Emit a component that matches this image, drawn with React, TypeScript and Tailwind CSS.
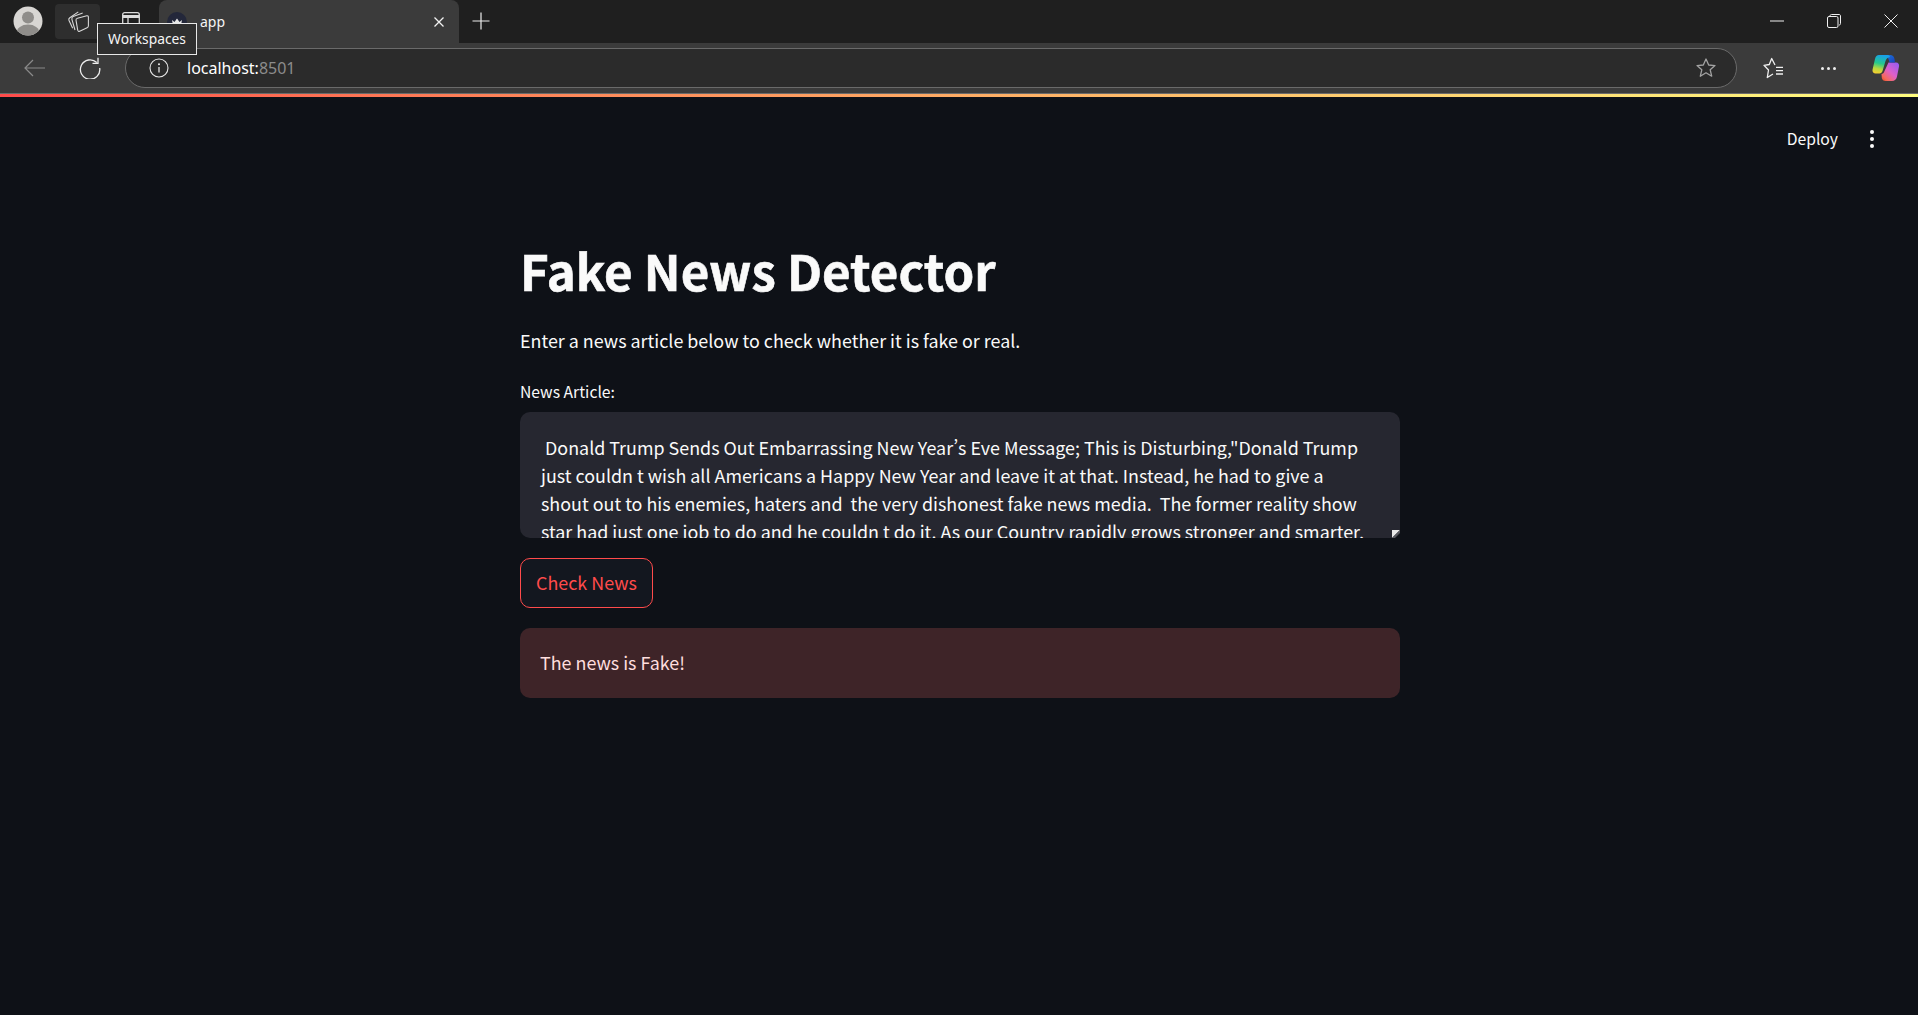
import React from "react";

const sans = "font-['Noto_Sans_CJK_SC','Noto_Sans',sans-serif]";
const ui = "font-['Noto_Sans',sans-serif]";

function Copilot() {
  return (
    <svg width="28" height="28" viewBox="0 0 28 28">
      <defs>
        <linearGradient id="cpA" x1="0.5" y1="0" x2="0.3" y2="1">
          <stop offset="0" stopColor="#18a0ea" />
          <stop offset="0.45" stopColor="#25c98c" />
          <stop offset="0.75" stopColor="#b8d840" />
          <stop offset="1" stopColor="#f5cf30" />
        </linearGradient>
        <linearGradient id="cpB" x1="0" y1="0" x2="1" y2="1">
          <stop offset="0" stopColor="#1a78e0" />
          <stop offset="1" stopColor="#1b3fb8" />
        </linearGradient>
        <linearGradient id="cpC" x1="0.9" y1="0.05" x2="0.1" y2="1">
          <stop offset="0" stopColor="#9a5cf0" />
          <stop offset="0.5" stopColor="#e060c8" />
          <stop offset="0.85" stopColor="#f56a5a" />
          <stop offset="1" stopColor="#e8502f" />
        </linearGradient>
      </defs>
      <path d="M16.500 8.500H24c2.300 0 3.500 1.800 3 4l-2 10c-.6 2.800-2.200 4.500-5 4.500h-6.500c-2 0-3.200-1.200-3.700-3L9.500 20c1.400-.2 2.300-1 2.800-2.500z" fill="url(#cpC)" />
      <path d="M14 1h4c2.500 0 4 1.500 4.500 4l.5 3.500h-5.500c-.8-3.500-1.800-6-3.500-7.500z" fill="url(#cpB)" />
      <path d="M7 1h8c1.500 0 2.500.6 3 2-2.300.3-3.700 1.600-4.500 4l-3 10c-.5 1.500-1.500 2.500-3 2.500h-3C1 19.500 0 17.500.7 15L3 5C3.500 2.500 5 1 7 1z" fill="url(#cpA)" />
    </svg>
  );
}

function Star() {
  return (
    <svg width="22" height="22" viewBox="0 0 22 22" fill="none" stroke="#a3a3a3" strokeWidth="1.300" strokeLinejoin="round">
      <path d="M11 2l2.700 6 6.300.6-4.800 4.200 1.500 6.400L11 15.800l-5.700 3.400 1.500-6.400L2 8.600 8.300 8z" />
    </svg>
  );
}

export default function App() {
  return (
    <div className={`flex h-[1015px] w-[1918px] flex-col overflow-hidden bg-[#0e1117] ${sans}`}>
      {/* tab strip */}
      <div className="relative flex h-[43px] shrink-0 items-stretch bg-[#1f1f1f]">
        <div className="flex w-[55px] items-center justify-center pl-[1px] pb-[1px]">
          <svg width="30" height="30" viewBox="0 0 30 30">
            <circle cx="15" cy="15" r="14.500" fill="#d8d6d3" />
            <clipPath id="av"><circle cx="15" cy="15" r="14.500" /></clipPath>
            <g clipPath="url(#av)">
              <circle cx="15" cy="11.500" r="6" fill="#8f8d8a" />
              <ellipse cx="15" cy="27" rx="11.500" ry="8.500" fill="#8f8d8a" />
            </g>
          </svg>
        </div>
        <div className="my-[4px] flex w-[45px] items-center justify-center rounded-[4px] bg-[#2e2e2e]">
          <svg width="22" height="22" viewBox="0 0 22 22" fill="none" stroke="#d6d6d6" strokeWidth="1.100" strokeLinejoin="round">
            <path d="M5.700 17.300L2 9.500C1.400 8.300 1.700 7.500 2.800 6.700L11.300 .9" />
            <path d="M8 19L4.900 8.300C4.600 7 5 6.100 6.200 5.600L15.700 1.900" />
            <path d="M10.500 7.200l9.300-2.400c1-.2 1.600.3 1.600 1.300v8.600c0 1-.4 1.600-1.300 2l-7.400 3.500c-1 .4-1.700 0-2-1L9 9.200c-.2-1 .4-1.700 1.500-2z" />
          </svg>
        </div>
        <div className="flex w-[59px] items-center justify-center pl-[3px] pb-[2px]">
          <svg width="18" height="18" viewBox="0 0 18 18" fill="none" stroke="#dcdcdc" strokeWidth="1.300">
            <rect x="0.700" y="0.700" width="16.600" height="16.600" rx="2" />
            <path d="M0.700 4.500h16.600" strokeWidth="3" />
            <path d="M6 5v12" />
          </svg>
        </div>
        <div className="relative flex w-[300px] items-center rounded-t-[8px] bg-[#3b3b3b] pl-[8px] pr-[14px] pt-[1px]">
          <svg width="20" height="20" viewBox="0 0 20 20">
            <circle cx="10" cy="10" r="10" fill="#23273a" />
            <path d="M5 8l2.500 2L10 6.500l2.500 3.500L15 8l-1.200 6H6.200z" fill="#e8e8e8" />
          </svg>
          <span className={`ml-[13px] flex-1 text-[14px] leading-[20px] text-[#f5f5f5] ${ui}`}>app</span>
          <svg width="12" height="12" viewBox="0 0 12 12" stroke="#f2f2f2" strokeWidth="1.300"><path d="M1.500 1.500l9 9M10.500 1.500l-9 9" /></svg>
        </div>
        <div className="flex w-[44px] items-center justify-center pb-[1px]">
          <svg width="18" height="18" viewBox="0 0 18 18" stroke="#ededed" strokeWidth="1.200"><path d="M9 .5v17M.5 9h17" /></svg>
        </div>
        <div className="flex-1" />
        <div className="flex w-[57px] items-center justify-center pb-[1px] pr-[2px]">
          <svg width="14" height="2" viewBox="0 0 14 2" stroke="#f0f0f0" strokeWidth="1"><path d="M0 1h14" /></svg>
        </div>
        <div className="flex w-[57px] items-center justify-center pb-[1px] pr-[2px]">
          <svg width="14" height="14" viewBox="0 0 14 14" fill="none" stroke="#f0f0f0" strokeWidth="1">
            <rect x="0.500" y="2.500" width="10.500" height="11" rx="1.500" />
            <path d="M3 2.500V2c0-1 .6-1.500 1.500-1.500H12c1 0 1.500.6 1.500 1.500v7.500c0 1-.5 1.500-1.500 1.500" />
          </svg>
        </div>
        <div className="flex w-[55px] items-center justify-center pb-[1px]">
          <svg width="14" height="14" viewBox="0 0 14 14" stroke="#f0f0f0" strokeWidth="1"><path d="M.5.500l13 13M13.500.500l-13 13" /></svg>
        </div>
        <div className={`absolute left-[97px] top-[23px] z-10 flex h-[32px] w-[100px] items-center justify-center border border-[#e8e8e8] bg-[#2f2f2f] text-[13.800px] text-[#f5f5f5] ${ui}`}>
          Workspaces
        </div>
      </div>

      {/* toolbar */}
      <div className="flex h-[51px] shrink-0 items-center border-b border-[#6b6b6b] bg-[#3b3b3b]">
        <div className="flex w-[68px] items-center justify-center pl-[2px]">
          <svg width="22" height="18" viewBox="0 0 22 18" fill="none" stroke="#8a8a8a" strokeWidth="1.200"><path d="M21 9H1M9 1L1 9l8 8" /></svg>
        </div>
        <div className="flex w-[57px] items-center justify-center pr-[14px]">
          <svg width="22" height="22" viewBox="0 0 22 22" fill="none" stroke="#ededed" strokeWidth="1.300">
            <path d="M17.800 5.500A9.700 9.700 0 1 0 20.700 11" />
            <path d="M19 .8v5.500h-5.500" />
          </svg>
        </div>
        <div className="flex h-[40px] w-[1612px] items-center rounded-[20px] border border-[#6a6a6a] bg-[#2b2b2b] pl-[23px] pr-[19px]">
          <svg width="20" height="20" viewBox="0 0 20 20" fill="none" stroke="#e5e5e5" strokeWidth="1.100">
            <circle cx="10" cy="10" r="9" />
            <path d="M10 9v5.500" strokeWidth="1.300" />
            <circle cx="10" cy="6.200" r="0.500" />
          </svg>
          <span className={`ml-[18px] flex-1 text-[16px] text-white ${ui}`}>
            localhost:<span className="text-[#8c8c8c]">8501</span>
          </span>
          <Star />
        </div>
        <div className="flex w-[72px] items-center justify-center">
          <svg width="22" height="22" viewBox="0 0 22 22" fill="none" stroke="#f0f0f0" strokeWidth="1.300" strokeLinejoin="round">
            <path d="M13 8L9.700 1.500 7.300 7.500 2 8.300 6.500 13 5.300 20.500 11 17" />
            <path d="M14 10.300h7M14 13.700h7M14 17h7" />
          </svg>
        </div>
        <div className="flex w-[38px] items-center justify-center gap-[3px]">
          <span className="h-[3px] w-[3px] shrink-0 rounded-full bg-[#eee]" />
          <span className="h-[3px] w-[3px] shrink-0 rounded-full bg-[#eee]" />
          <span className="h-[3px] w-[3px] shrink-0 rounded-full bg-[#eee]" />
        </div>
        <div className="flex w-[71px] items-center justify-center pl-[7px]"><Copilot /></div>
      </div>

      {/* decoration */}
      <div className="h-[3px] shrink-0 bg-gradient-to-r from-[#ff4b4b] to-[#fffd80]" />

      {/* deploy bar */}
      <div className="flex shrink-0 items-center justify-end pr-[41px] pt-[30px]">
        <span className="text-[15.700px] leading-[24px] text-[#fafafa]">Deploy</span>
        <span className="ml-[32px] flex flex-col gap-[3px] pr-[3px]">
          <span className="h-[4px] w-[4px] rounded-full bg-[#fafafa]" />
          <span className="h-[4px] w-[4px] rounded-full bg-[#fafafa]" />
          <span className="h-[4px] w-[4px] rounded-full bg-[#fafafa]" />
        </span>
      </div>

      {/* main */}
      <main className="ml-[520px] flex w-[880px] flex-col">
        <h1 className="mt-[84px] text-[49.200px] font-bold leading-[70px] text-[#fafafa] [-webkit-text-stroke:0.6px_#fafafa]">Fake News Detector</h1>
        <p className="mt-[21px] text-[17.900px] leading-[28px] text-[#fafafa]">
          Enter a news article below to check whether it is fake or real.
        </p>
        <label className="mt-[26px] text-[15.700px] leading-[24px] text-[#fafafa]">News Article:</label>
        <div className="relative mt-[8px] h-[126px] overflow-hidden rounded-[10px] rounded-br-none bg-[#262730] px-[21px] pt-[21px] text-[17.900px] leading-[28px] text-[#fafafa] [font-feature-settings:'pwid']">
          <div className="whitespace-pre"> Donald Trump Sends Out Embarrassing New Year’s Eve Message; This is Disturbing,"Donald Trump</div>
          <div className="whitespace-pre">just couldn t wish all Americans a Happy New Year and leave it at that. Instead, he had to give a</div>
          <div className="whitespace-pre">shout out to his enemies, haters and  the very dishonest fake news media.  The former reality show</div>
          <div className="whitespace-pre">star had just one job to do and he couldn t do it. As our Country rapidly grows stronger and smarter,</div>
          <svg className="absolute bottom-0 right-0" width="8" height="8" viewBox="0 0 8 8"><path d="M0 0h8L0 8z" fill="#e8e8e8" /><path d="M8 0v8H0z" fill="#55565c" /><path d="M8 3v5H3z" fill="#0e1117" /></svg>
        </div>
        <button className="mt-[20px] flex h-[50px] w-[133px] items-center justify-center rounded-[10px] border border-[#ff4b4b] bg-[#13171f] pb-[2px] text-[17.900px] text-[#ff4b4b]">
          Check News
        </button>
        <div className="mt-[20px] flex h-[70px] items-center rounded-[10px] bg-[#3e2428] px-[20px] pb-[2px] text-[17.900px] text-[#ffdede]">
          The news is Fake!
        </div>
      </main>
    </div>
  );
}
